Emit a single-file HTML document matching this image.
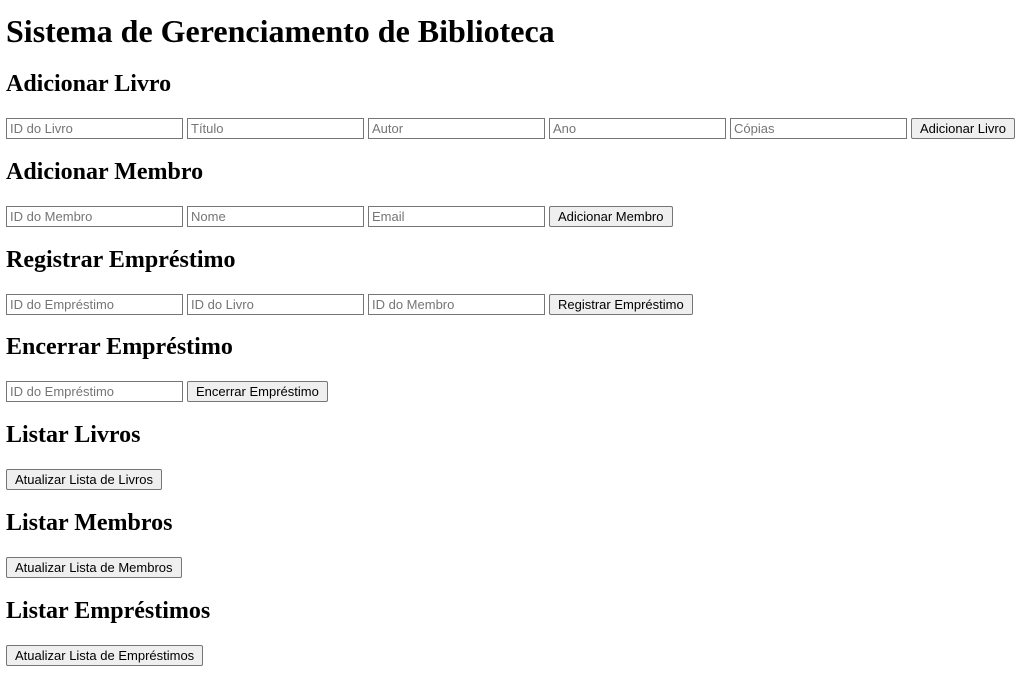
<!DOCTYPE html>
<html><head><meta charset="utf-8"><style>
body{margin:8px 6px;font-family:"Liberation Serif",serif;}
h1{font-size:32px;margin:13px 0 21px;}
h2{font-size:24px;margin:19.92px 0;}
.r{display:flex;gap:4px;height:21px;white-space:nowrap;}
input{width:177px;height:21px;box-sizing:border-box;font:13px "Liberation Sans",sans-serif;border:1px solid #767676;padding:1px 3px;margin:0;flex:none;}
button{height:21px;box-sizing:border-box;font:13px "Liberation Sans",sans-serif;border:1px solid #767676;background:#efefef;border-radius:2px;padding:1px 8px;margin:0;flex:none;}
</style></head><body>
<h1>Sistema de Gerenciamento de Biblioteca</h1>
<h2>Adicionar Livro</h2>
<div class="r"><input placeholder="ID do Livro"><input placeholder="Título"><input placeholder="Autor"><input placeholder="Ano"><input placeholder="Cópias"><button>Adicionar Livro</button></div>
<h2>Adicionar Membro</h2>
<div class="r"><input placeholder="ID do Membro"><input placeholder="Nome"><input placeholder="Email"><button>Adicionar Membro</button></div>
<h2>Registrar Empréstimo</h2>
<div class="r"><input placeholder="ID do Empréstimo"><input placeholder="ID do Livro"><input placeholder="ID do Membro"><button>Registrar Empréstimo</button></div>
<h2>Encerrar Empréstimo</h2>
<div class="r"><input placeholder="ID do Empréstimo"><button>Encerrar Empréstimo</button></div>
<h2>Listar Livros</h2>
<div class="r"><button>Atualizar Lista de Livros</button></div>
<h2>Listar Membros</h2>
<div class="r"><button>Atualizar Lista de Membros</button></div>
<h2>Listar Empréstimos</h2>
<div class="r"><button>Atualizar Lista de Empréstimos</button></div>
</body></html>
